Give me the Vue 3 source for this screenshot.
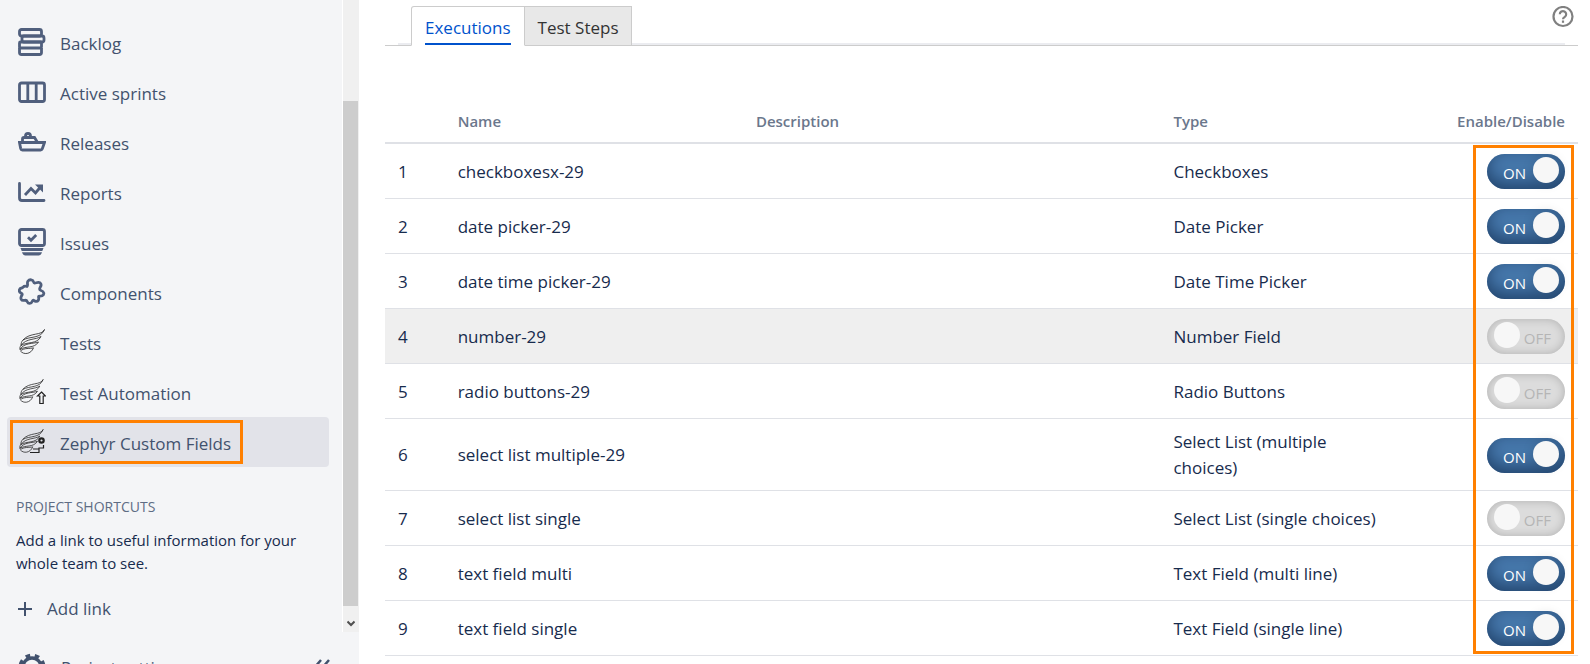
<template>
  <div class="page">
    <aside class="sidebar">
      <div class="sidebar-body">
        <div class="sidebar-content">
          <nav class="nav">
            <a v-for="item in navItems" :key="item.icon" href="#" class="nav-item" :class="{ active: item.active }" @click.prevent>
              <span class="nav-inner">
                <svg class="nav-icon" viewBox="0 0 28 28" aria-hidden="true">
                  <g v-if="item.icon === 'backlog'" class="line">
                    <rect x="1.5" y="1.5" width="22" height="6.5" rx="2" />
                    <rect x="4" y="8" width="22" height="6" rx="2" />
                    <rect x="1.5" y="14" width="22" height="6" rx="1" />
                    <path d="M1.5 20v4.5a2 2 0 0 0 2 2h18a2 2 0 0 0 2-2V20" />
                  </g>
                  <g v-else-if="item.icon === 'sprints'" class="line">
                    <rect x="1.5" y="5" width="25" height="18.5" rx="2" />
                    <path d="M9.8 5v18.5M18.2 5v18.5" />
                  </g>
                  <g v-else-if="item.icon === 'releases'" class="line">
                    <path d="M1.5 14.5h25l-2.2 6.3a1.8 1.8 0 0 1-1.7 1.2H4.4a1.8 1.8 0 0 1-1.7-1.4z" />
                    <path d="M4.5 14.5V11a1.5 1.5 0 0 1 1.500-1.500h10.500l3 5M7.500 9.500V8a2.500 2.500 0 0 1 5 0v1.500" />
                  </g>
                  <g v-else-if="item.icon === 'reports'" class="line">
                    <path d="M1.5 5.500v14.500a2.500 2.500 0 0 0 2.500 2.500h22" stroke-linecap="round" />
                    <path d="M7 17l6-6.500 4.500 4.500 5-6" />
                    <path class="solid" d="M17 6.500h8v8z" />
                  </g>
                  <g v-else-if="item.icon === 'issues'" class="line">
                    <rect x="1.5" y="1.5" width="25" height="16" rx="2" />
                    <path d="M10 9.200l3 3 5.200-5.200" />
                    <path class="solid" d="M2.500 20h23l-1.200 3h-20.600zM4 24.300h20c-.6 2-1.600 3.100-3.200 3.100H7.200C5.600 27.400 4.600 26.300 4 24.300z" />
                  </g>
                  <g v-else-if="item.icon === 'components'" class="line">
                    <path stroke-linejoin="round" d="M9 8.500C10.500 7 8.500 5 10 3c1.600-2 5-1.500 5.600 1 .5 2.200 2.600.5 4.600.3 2.400-.2 3.600 2.200 2.400 4.200-1 1.900-1.800 3.300.4 4 3.300 1 3.700 4 1.200 5.200-1.900.9-4-.5-3.600 1.700.6 2.400-.6 4.300-2.900 3.900-1.800-.4-2.200-2.300-3.200-.3-1.400 3.300-4.300 3-5.200.7-.8-2.100-1.600-1.500-3.600-1.300-2.400.3-3.400-1.900-2.400-4 .8-1.700 1.800-2.400-.3-3.400-2.700-1.300-2-4.600.6-5 2.200-.3 1.100-2.800 5.400-1.500z" />
                  </g>
                  <g v-else class="feather">
                    <g :transform="item.icon === 'tests' ? undefined : 'scale(.95)'">
                      <path d="M26.500 1.500C24 8 12 4 5 12c7-4 18-1 21.500-10.500z" />
                      <path d="M23 8.500C18 12 8 10 3 17.500c6-4 16-1 20-9z" />
                      <path d="M20.500 14C15 16 6 14.500 2 21.500c6-4 14-.5 18.500-7.500z" />
                      <path d="M15.500 19.800C12 21 6 19.500 2.500 23c3 4 10.500 3.500 13-3.200z" />
                      <path d="M5 12c-1.500 1.500-2 3.500-2 5.500-1 1-1.300 2.500-1 4" />
                    </g>
                    <path v-if="item.icon === 'automation'" class="mark" d="M23.500 14l4 4h-2.300v7.500h-3.400V18h-2.300z" />
                    <g v-if="item.icon === 'fields'">
                      <path class="mark" d="M12 24.500h9V20h4.500v-3M15 21h6" />
                      <circle cx="23.500" cy="12.500" r="2.200" stroke-width="2.200" />
                    </g>
                  </g>
                </svg>
                <span class="nav-label">{{ item.label }}</span>
              </span>
            </a>
          </nav>

          <section class="shortcuts">
            <h2>PROJECT SHORTCUTS</h2>
            <p>Add a link to useful information for your whole team to see.</p>
            <button type="button" class="add-link">
              <svg viewBox="0 0 14 14" aria-hidden="true"><path d="M7 0v14M0 7h14" /></svg>
              Add link
            </button>
          </section>
        </div>

        <div class="scrollbar">
          <div class="thumb"></div>
          <svg viewBox="0 0 8 7" aria-hidden="true"><path d="M.5 1.500L4 5l3.500-3.500" /></svg>
        </div>
      </div>

      <div class="sidebar-footer">
        <a href="#" class="settings" @click.prevent>
          <svg viewBox="0 0 28 28" aria-hidden="true">
            <circle cx="14" cy="14" r="9" fill="none" stroke="currentColor" stroke-width="3.500" />
            <circle cx="14" cy="14" r="11.500" fill="none" stroke="currentColor" stroke-width="4" stroke-dasharray="4.500 4.530" transform="rotate(12 14 14)" />
          </svg>
          <span class="nav-label">Project settings</span>
        </a>
        <button type="button" class="collapse" aria-label="Collapse sidebar">
          <svg viewBox="0 0 18 16"><path d="M8 1L2 8l6 7M16 1l-6 7 6 7" /></svg>
        </button>
      </div>
    </aside>

    <main class="main">
      <div class="tabs">
        <button
          v-for="tab in tabs"
          :key="tab"
          type="button"
          class="tab"
          :class="{ current: tab === currentTab }"
          @click="currentTab = tab"
        >
          <span>{{ tab }}</span>
        </button>
        <button type="button" class="help" aria-label="Help">
          <svg viewBox="0 0 22 22">
            <circle cx="11" cy="10.500" r="9.500" />
            <path d="M7.800 8.300a3.200 3.200 0 1 1 5 2.600c-1.200.8-1.800 1.300-1.800 2.400" />
            <path d="M11 14.500v2.300" />
          </svg>
        </button>
      </div>

      <div class="table-wrap">
        <table>
          <thead>
            <tr>
              <th class="col-index"></th>
              <th class="col-name">Name</th>
              <th class="col-description">Description</th>
              <th class="col-type">Type</th>
              <th class="col-toggle">Enable/Disable</th>
            </tr>
          </thead>
          <tbody>
            <tr v-for="(field, index) in fields" :key="field.name" :class="{ hovered: field.hovered }">
              <td>{{ index + 1 }}</td>
              <td>{{ field.name }}</td>
              <td></td>
              <td>{{ field.type }}</td>
              <td class="col-toggle">
                <label class="toggle" :class="{ on: field.enabled }">
                  <input v-model="field.enabled" type="checkbox" :aria-label="field.name" />
                  <span class="toggle-text">{{ field.enabled ? 'ON' : 'OFF' }}</span>
                  <span class="knob"></span>
                </label>
              </td>
            </tr>
          </tbody>
        </table>
        <div class="toggle-frame"></div>
      </div>
    </main>
  </div>
</template>

<script setup>
import { ref } from 'vue'

const navItems = [
  { label: 'Backlog', icon: 'backlog' },
  { label: 'Active sprints', icon: 'sprints' },
  { label: 'Releases', icon: 'releases' },
  { label: 'Reports', icon: 'reports' },
  { label: 'Issues', icon: 'issues' },
  { label: 'Components', icon: 'components' },
  { label: 'Tests', icon: 'tests' },
  { label: 'Test Automation', icon: 'automation' },
  { label: 'Zephyr Custom Fields', icon: 'fields', active: true }
]

const tabs = ['Executions', 'Test Steps']
const currentTab = ref('Executions')

const fields = ref([
  { name: 'checkboxesx-29', type: 'Checkboxes', enabled: true },
  { name: 'date picker-29', type: 'Date Picker', enabled: true },
  { name: 'date time picker-29', type: 'Date Time Picker', enabled: true },
  { name: 'number-29', type: 'Number Field', enabled: false, hovered: true },
  { name: 'radio buttons-29', type: 'Radio Buttons', enabled: false },
  { name: 'select list multiple-29', type: 'Select List (multiple choices)', enabled: true },
  { name: 'select list single', type: 'Select List (single choices)', enabled: false },
  { name: 'text field multi', type: 'Text Field (multi line)', enabled: true },
  { name: 'text field single', type: 'Text Field (single line)', enabled: true }
])
</script>

<style>
body {
  overflow: hidden;
}
</style>

<style scoped>
.page {
  display: flex;
  height: 100vh;
  overflow: hidden;
  background: #fff;
  color: #172b4d;
  font-family: 'Segoe UI', 'Open Sans', 'Noto Sans', sans-serif;
  font-size: 17px;
}

.page * {
  box-sizing: border-box;
}

button {
  padding: 0;
  border: 0;
  background: none;
  font: inherit;
  color: inherit;
  cursor: pointer;
}

a {
  color: inherit;
  text-decoration: none;
}

svg {
  display: block;
  flex: none;
}

.sidebar {
  display: flex;
  flex: none;
  flex-direction: column;
  width: 359px;
  background: #f4f5f7;
  color: #42526e;
}

.sidebar-body {
  display: flex;
  flex: 1;
  min-height: 0;
}

.sidebar-content {
  flex: 1;
}

.nav {
  padding: 17px 13px 0 7px;
}

.nav-item {
  display: flex;
  align-items: center;
  height: 50px;
  padding-left: 3px;
  border-radius: 4px;
}

.nav-item.active {
  background: #e2e3e9;
}

.nav-inner {
  display: flex;
  align-items: center;
  gap: 14px;
  height: 44px;
  padding: 0 9px 0 5px;
  border: 3px solid transparent;
}

.active .nav-inner {
  border-color: #ff8000;
}

.nav-icon {
  width: 28px;
  height: 28px;
}

.nav-label {
  padding-top: 2px;
}

.line {
  fill: none;
  stroke: #505f7d;
  stroke-width: 2.8;
}

.solid {
  fill: #505f7d;
  stroke: none;
}

.feather {
  fill: none;
  stroke: #222;
  stroke-width: 0.8;
}

.mark {
  stroke-width: 1.2;
}

.shortcuts {
  padding: 30px 16px 0;
}

.shortcuts h2 {
  margin: 0;
  color: #5e6c84;
  font-size: 14px;
  font-weight: 400;
  line-height: 20px;
}

.shortcuts p {
  margin: 12px 0 0;
  color: #172b4d;
  font-size: 15px;
  line-height: 23px;
}

.add-link {
  display: flex;
  align-items: center;
  gap: 15px;
  margin-top: 22px;
  padding-left: 2px;
  line-height: 24px;
}

.add-link svg {
  width: 14px;
  height: 14px;
  fill: none;
  stroke: currentColor;
  stroke-width: 2;
}

.scrollbar {
  display: flex;
  flex-direction: column;
  align-items: center;
  width: 17px;
  padding: 101px 1px 0 0;
  border-left: 1px solid #fff;
  background: #f0f0f0;
}

.thumb {
  flex: 1;
  width: 100%;
  background: #cdcdcd;
}

.scrollbar svg {
  width: 8px;
  height: 7px;
  margin: 14px 0 5px;
  fill: none;
  stroke: #505050;
  stroke-width: 2;
}

.sidebar-footer {
  display: flex;
  align-items: flex-start;
  justify-content: space-between;
  height: 32px;
  padding: 20px 28px 0 18px;
}

.settings {
  display: flex;
  align-items: center;
  gap: 15px;
  line-height: 28px;
}

.settings svg {
  width: 28px;
  height: 28px;
}

.collapse svg {
  width: 18px;
  height: 16px;
  margin-top: 7px;
  fill: none;
  stroke: #42526e;
  stroke-width: 2.5;
}

.main {
  flex: 1;
  min-width: 0;
  padding: 6px 12px 0 26px;
}

.tabs {
  display: flex;
  position: relative;
  height: 40px;
  padding-left: 26px;
  border-bottom: 1px solid #ccc;
}

.tabs::before {
  content: '';
  position: absolute;
  right: 13px;
  bottom: 0;
  left: 13px;
  height: 2px;
  background: #ebecf0;
}

.tab {
  display: flex;
  position: relative;
  height: 40px;
  padding: 0 13px;
  border: 1px solid #ccc;
  background: #e8e8e8;
  color: #333;
}

.tab + .tab {
  padding-right: 12px;
  border-left: 0;
}

.tab span {
  height: 38px;
  line-height: 42px;
}

.tab.current {
  border-bottom-color: #fff;
  border-radius: 3px 0 0 0;
  background: #fff;
  color: #0052cc;
}

.current span {
  border-bottom: 2px solid #0052cc;
}

.help {
  align-self: flex-start;
  margin-left: auto;
  margin-right: 4px;
}

.help svg {
  width: 22px;
  height: 22px;
  fill: none;
  stroke: #808080;
  stroke-width: 2.2;
}

.table-wrap {
  position: relative;
  padding-top: 52px;
}

table {
  width: 100%;
  border-collapse: separate;
  border-spacing: 0;
  table-layout: fixed;
}

th {
  height: 46px;
  padding: 2px 13px 0;
  border-bottom: 2px solid #dfe1e6;
  color: #6b778c;
  font-size: 15px;
  font-weight: 600;
  line-height: 20px;
  text-align: left;
}

td {
  height: 55px;
  padding: 10px 13px 9px;
  border-bottom: 1px solid #dfe1e6;
  line-height: 26px;
}

.hovered td {
  background: #efefef;
}

.col-index {
  width: 5%;
}

.col-name {
  width: 25%;
}

.col-description {
  width: 35%;
}

.col-type {
  width: 20%;
}

.col-toggle {
  width: 15%;
  text-align: right;
}

.toggle {
  display: flex;
  position: relative;
  align-items: center;
  justify-content: flex-end;
  width: 78px;
  height: 35px;
  margin-left: auto;
  padding: 3px 14px 0 16px;
  border-radius: 18px;
  background: #dcdcdc;
  box-shadow: inset 0 0 10px rgba(0, 0, 0, 0.2);
  color: #b5b5b5;
  font-size: 15px;
  cursor: pointer;
}

.toggle.on {
  justify-content: flex-start;
  background: #4577ab;
  box-shadow: inset 0 -6px 16px rgba(0, 20, 50, 0.5);
  color: #fff;
}

.toggle input {
  position: absolute;
  inset: 0;
  width: 100%;
  height: 100%;
  margin: 0;
  opacity: 0;
  cursor: pointer;
}

.knob {
  position: absolute;
  top: 3px;
  left: 7px;
  width: 26px;
  height: 26px;
  border-radius: 50%;
  background: #f7f7f7;
  pointer-events: none;
}

.on .knob {
  right: 6px;
  left: auto;
  box-shadow: 0 0 12px rgba(0, 0, 0, 0.15);
}

/* frame over the whole column of toggles */
.toggle-frame {
  position: absolute;
  top: 99px;
  right: 4px;
  bottom: 2px;
  width: 101px;
  border: 3px solid #ff8000;
  pointer-events: none;
}
</style>
